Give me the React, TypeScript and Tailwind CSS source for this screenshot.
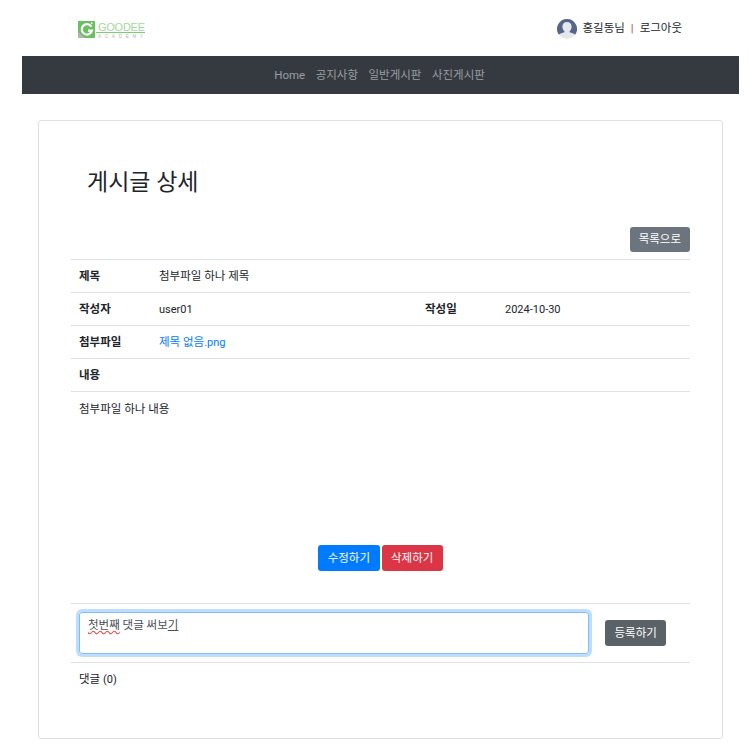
const FONT = "font-['Roboto','Noto_Sans_CJK_KR',sans-serif]";

function Logo() {
  return (
    <svg width="68" height="20" viewBox="0 -3 68 20" className="block">
      <rect x="0" y="0" width="17" height="17" fill="#6cbf62" />
      <path d="M0 11 L7 17 H0z" fill="#b4b4b4" />
      <path d="M13.4 5.6 A5.2 5.2 0 1 0 14 9.6 L10 9.6" fill="none" stroke="#fff" strokeWidth="2.2" />
      <rect x="13" y="1.5" width="1.5" height="1.5" fill="#fff" />
      <text x="20" y="10" fontSize="11" textLength="47" lengthAdjust="spacing" fill="#a3d89c" fontFamily="'Liberation Sans', sans-serif">GOODEE</text>
      <rect x="18" y="11" width="49" height="1" fill="#7fc977" />
      <text x="20" y="16.5" fontSize="4.5" textLength="45" lengthAdjust="spacing" fill="#b4b4b4" fontFamily="'Liberation Sans', sans-serif">ACADEMY</text>
    </svg>
  );
}

function Avatar() {
  return (
    <svg width="20" height="20" viewBox="0 0 20 20" className="block">
      <circle cx="10" cy="10" r="10" fill="#e6e9ec" />
      <path d="M10 0A10 10 0 0 0 1.6 15.4C3 14.6 5.4 14 7.4 13.2v-1C6 11 5.4 9.4 5.4 7.6 5.4 4.9 7.2 3 10 3s4.6 1.9 4.6 4.6c0 1.8-.6 3.4-2 4.6v1c2 .8 4.4 1.4 5.8 2.2A10 10 0 0 0 10 0z" fill="#56658a" />
    </svg>
  );
}

function Row({ children }: { children: React.ReactNode }) {
  return <div className="flex h-[33px] items-center border-t border-[#dee2e6] px-2 pt-[2px] text-[11.5px] text-[#212529]">{children}</div>;
}

function Th({ children, w }: { children: React.ReactNode; w: string }) {
  return <div className={`${w} font-bold`}>{children}</div>;
}

export default function App() {
  return (
    <div className={`${FONT} h-[754px] w-[750px] overflow-hidden bg-white`}>
      <div className="ml-[22px] w-[717px]">
        <header className="flex h-[56px] items-center justify-between pl-[56px] pr-[57px]">
          <Logo />
          <div className="flex items-center pt-[2px] text-[11.5px] text-[#212529]">
            <Avatar />
            <span className="ml-[6px]">홍길동님</span>
            <span className="mx-[6px] text-[#b5474f]">|</span>
            <span>로그아웃</span>
          </div>
        </header>
        <nav className="flex h-[38px] items-center justify-center gap-[10.5px] bg-[#343a40] pr-[2px] pt-[2px] text-[11.5px] text-[#9a9da0]">
          <span>Home</span>
          <span>공지사항</span>
          <span>일반게시판</span>
          <span>사진게시판</span>
        </nav>
      </div>
      <main className="ml-[38px] mt-[26px] h-[619px] w-[685px] rounded-[3px] border border-[#dfe0e6] bg-white px-[32px]">
        <h2 className="ml-[16px] mt-[44px] h-[35px] text-[23px] leading-[35px] text-[#212529]">게시글 상세</h2>
        <div className="mt-[27px] flex h-[32px] items-start justify-end">
          <button className="h-[25px] rounded-[3px] bg-[#6c757d] px-[9px] pt-[1px] text-[11.5px] text-white">목록으로</button>
        </div>
        <Row><Th w="w-[80px]">제목</Th><span>첨부파일 하나 제목</span></Row>
        <Row>
          <Th w="w-[80px]">작성자</Th>
          <span className="w-[266px] text-[11px]">user01</span>
          <Th w="w-[80px]">작성일</Th>
          <span className="text-[11px]">2024-10-30</span>
        </Row>
        <Row><Th w="w-[80px]">첨부파일</Th><span className="text-[#007bff]">제목 없음<span className="text-[11px]">.png</span></span></Row>
        <Row><Th w="w-[80px]">내용</Th></Row>
        <div className="h-[154px] border-t border-[#dee2e6] px-2 pt-[9px] text-[11.5px] text-[#212529]">첨부파일 하나 내용</div>
        <div className="flex h-[58px] items-start justify-center gap-[2px]">
          <button className="h-[26px] rounded-[3px] bg-[#007bff] px-[9.5px] pt-[1px] text-[11.5px] text-white">수정하기</button>
          <button className="h-[26px] rounded-[3px] bg-[#dc3545] px-[9.5px] pt-[1px] text-[11.5px] text-white">삭제하기</button>
        </div>
        <div className="flex h-[59px] items-center border-t border-[#dee2e6] px-2">
          <div className="h-[42px] w-[510px] rounded-[3px] border border-[#80bdff] px-2 py-[4px] text-[11.5px] text-[#495057] shadow-[0_0_0_3px_rgba(0,123,255,0.25)]">
            <span className="underline decoration-wavy decoration-[#e05050]">첫번째</span> 댓글 써보<span className="underline">기</span>
          </div>
          <button className="ml-[16px] h-[26px] rounded-[3px] bg-[#5a6268] px-[9.5px] pt-[1px] text-[11.5px] text-white">등록하기</button>
        </div>
        <div className="flex h-[33px] items-center border-t border-[#dee2e6] px-2 pt-[2px] text-[11.5px] text-[#212529]">
          <span>댓글 <span className="text-[11px]">(0)</span></span>
        </div>
      </main>
    </div>
  );
}
